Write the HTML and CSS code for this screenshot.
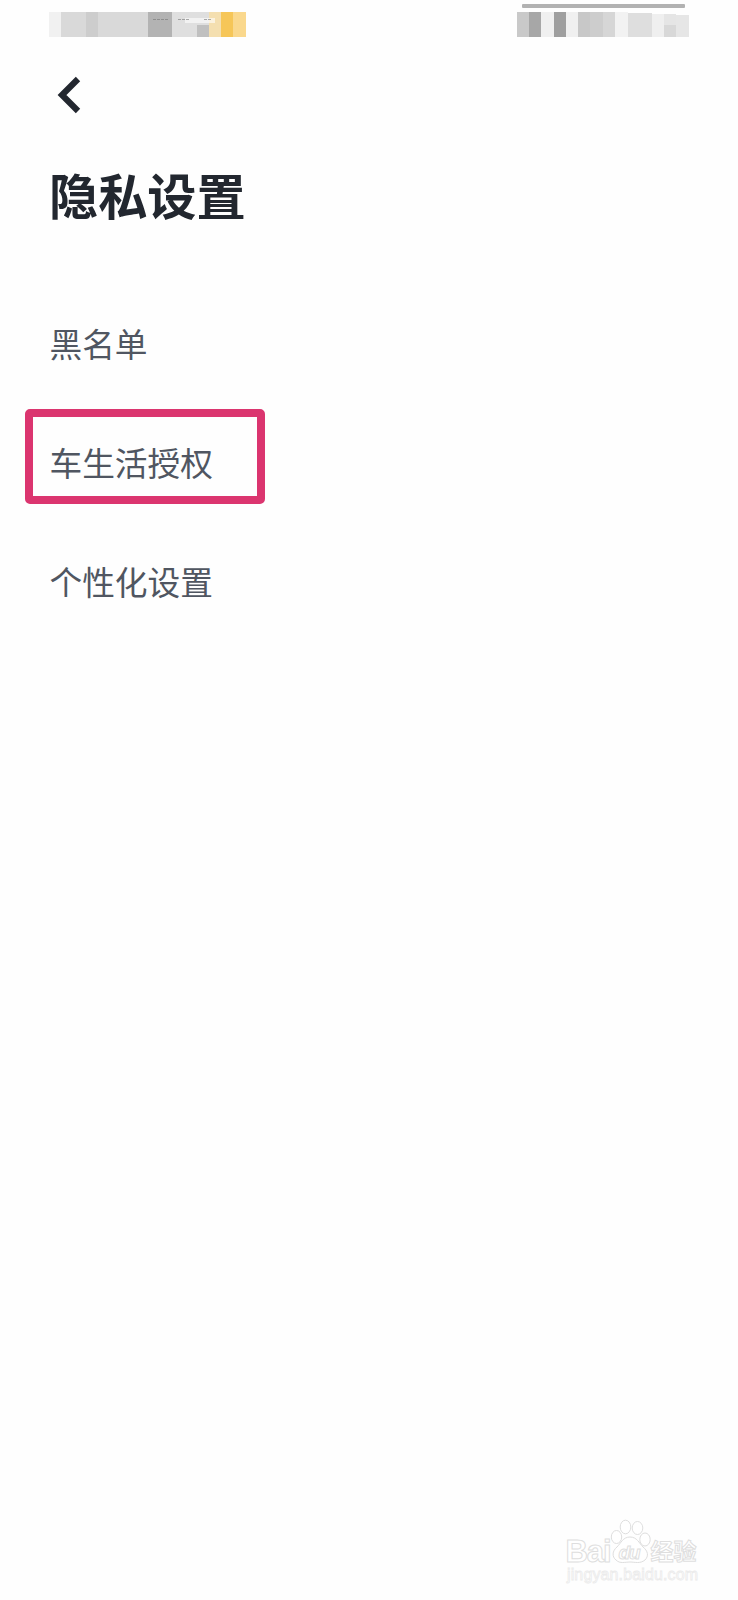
FILE: index.html
```html
<!DOCTYPE html>
<html lang="zh-CN">
<head>
  <meta charset="UTF-8">
  <meta name="viewport" content="width=device-width, initial-scale=1.0">
  <title>隐私设置</title>
  <link rel="stylesheet" href="styles.css">
</head>
<body>
  <div class="page">
    <div class="status-bar">
      <svg class="status-left" width="197" height="40" viewBox="49 0 197 40" shape-rendering="crispEdges">
        <rect x="49" y="12" width="12" height="25" fill="#f1f1f1"/>
        <rect x="61" y="12" width="25" height="25" fill="#d9d9d9"/>
        <rect x="86" y="12" width="12" height="25" fill="#cdcdcd"/>
        <rect x="98" y="12" width="50" height="25" fill="#d9d9d9"/>
        <rect x="148" y="12" width="24" height="25" fill="#b3b3b3"/>
        <rect x="172" y="12" width="37" height="25" fill="#dfdfdf"/>
        <rect x="197" y="25" width="12" height="12" fill="#c0c0c0"/>
        <rect x="209" y="12" width="12" height="25" fill="#f4dfb0"/>
        <rect x="221" y="12" width="12" height="25" fill="#f6c658"/>
        <rect x="233" y="12" width="13" height="25" fill="#fad88d"/>
        <rect x="185" y="18" width="30" height="5" fill="#fff" opacity=".6"/>
        <path d="M153 19.500H169M178 19.500H189M204 19.500H211" stroke="#777" stroke-dasharray="3 1" opacity=".6"/>
      </svg>
      <svg class="status-right" width="172" height="40" viewBox="517 0 172 40">
        <rect x="522" y="4" width="163" height="4" rx="1" fill="#b2b2b2"/>
        <g shape-rendering="crispEdges">
          <rect x="517" y="12" width="12" height="25" fill="#c9c9c9"/>
          <rect x="529" y="12" width="12" height="25" fill="#a7a7a7"/>
          <rect x="541" y="12" width="13" height="25" fill="#f0f0f0"/>
          <rect x="554" y="12" width="12" height="25" fill="#9f9f9f"/>
          <rect x="566" y="12" width="12" height="25" fill="#f0f0f0"/>
          <rect x="578" y="12" width="12" height="25" fill="#c8c8c8"/>
          <rect x="590" y="12" width="13" height="25" fill="#cdcdcd"/>
          <rect x="603" y="12" width="12" height="25" fill="#d6d6d6"/>
          <rect x="615" y="12" width="13" height="25" fill="#f2f2f2"/>
          <rect x="628" y="13" width="24" height="24" fill="#dedede"/>
          <rect x="652" y="14" width="12" height="23" fill="#efefef"/>
          <rect x="664" y="14" width="12" height="23" fill="#e5e5e5"/>
          <rect x="664" y="25" width="12" height="12" fill="#d8d8d8"/>
          <rect x="676" y="15" width="13" height="22" fill="#e6e6e6"/>
        </g>
      </svg>
    </div>

    <div class="nav">
      <svg class="back" width="24" height="38" viewBox="0 0 24 38">
        <path d="M21 3L5 19L21 35" fill="none" stroke="#22272f" stroke-width="6.200"/>
      </svg>
    </div>

    <h1 class="title">隐私设置</h1>

    <ul class="list">
      <li class="item">黑名单</li>
      <li class="item marked">车生活授权</li>
      <li class="item">个性化设置</li>
    </ul>

    <div class="watermark">
      <svg width="140" height="70" viewBox="562 1516 140 70">
        <g class="wm-outline">
          <text class="wm-latin" x="565.500" y="1561.500" textLength="46">Bai</text>
          <ellipse cx="616.500" cy="1537" rx="5.200" ry="6.500"/>
          <ellipse cx="625.500" cy="1527" rx="5.300" ry="6.800"/>
          <ellipse cx="637.500" cy="1528" rx="5.300" ry="6.500"/>
          <ellipse cx="645" cy="1539.500" rx="5.200" ry="6.500"/>
          <path d="M630 1537C623 1537 621 1543 617 1547C612 1551 612 1557 616 1560C620 1564 625 1562 630 1562C635 1562 640 1564 645 1560C649 1556 648 1551 643 1547C639 1543 637 1537 630 1537Z"/>
          <text class="wm-du" x="618.500" y="1558.500" textLength="22">du</text>
          <text class="wm-cjk" x="650.500" y="1560" textLength="46">经验</text>
        </g>
        <text class="wm-url" x="567" y="1579.500" textLength="131">jingyan.baidu.com</text>
      </svg>
    </div>
  </div>
</body>
</html>
```

FILE: styles.css
```css
body {
  margin: 0;
  padding: 0;
  background: #fefefe;
  font-family: "Noto Sans CJK SC", sans-serif;
}

.page {
  display: flex;
  flex-direction: column;
  height: 1600px;
  overflow: hidden;
}

.status-bar {
  display: flex;
  justify-content: space-between;
  height: 40px;
  padding: 0 49px;
}

.nav {
  padding: 36px 0 0 57px;
}

.back {
  display: block;
}

.title {
  margin: 44px 0 0 49px;
  font-size: 49.200px;
  line-height: 72px;
  font-weight: 700;
  color: #22272f;
}

.list {
  margin: 53px 0 0;
  padding: 0;
  list-style: none;
}

.item {
  position: relative;
  height: 119px;
  padding-left: 49.500px;
  font-size: 32.700px;
  line-height: 119px;
  color: #505661;
}

/* highlight frame lies over the row */
.marked::after {
  content: "";
  position: absolute;
  left: 24.500px;
  top: 7px;
  width: 224px;
  height: 79px;
  border: 8px solid #db356f;
  border-radius: 5px;
}

.watermark {
  display: flex;
  justify-content: flex-end;
  margin-top: auto;
  padding: 0 36px 14px 0;
}

.wm-outline {
  fill: #fff;
  stroke: #dedede;
  stroke-width: 1;
}

.wm-latin {
  font: 700 31px "Liberation Sans", Arial, sans-serif;
}

.wm-du {
  font: italic 700 19px "Liberation Sans", Arial, sans-serif;
}

.wm-cjk {
  font: 700 23px "Noto Sans CJK SC", sans-serif;
}

.wm-url {
  font: 16px "Liberation Sans", Arial, sans-serif;
  fill: #fff;
  stroke: #ebebeb;
  stroke-width: 0.800;
}
```
